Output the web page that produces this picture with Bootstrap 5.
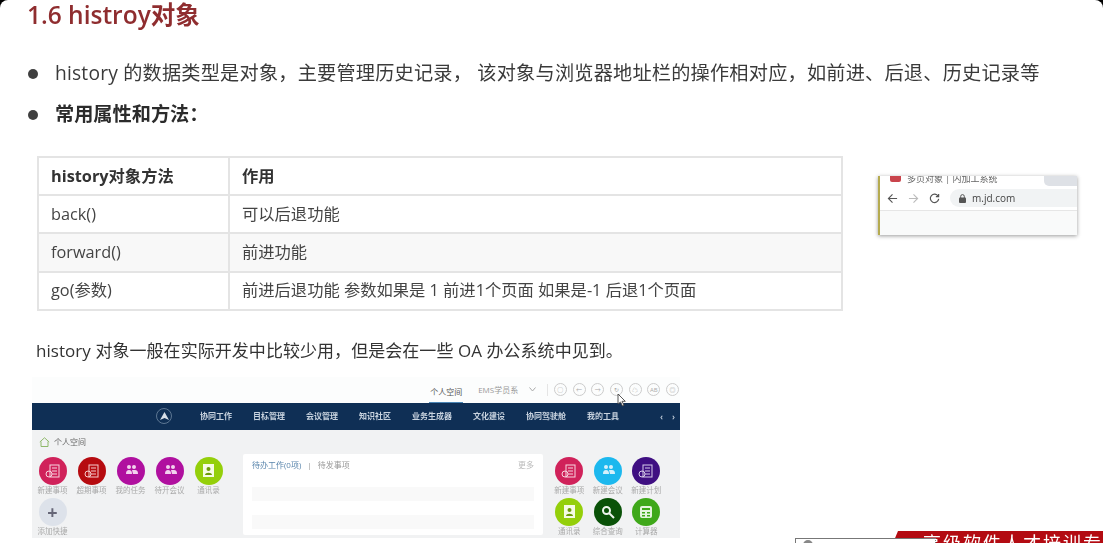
<!DOCTYPE html>
<html lang="zh">
<head>
<meta charset="utf-8">
<title>1.6 histroy对象</title>
<link href="https://cdn.jsdelivr.net/npm/bootstrap@5.3.0/dist/css/bootstrap.min.css" rel="stylesheet">
<style>
html,body{margin:0;height:543px;overflow:hidden;background:#000}
body{font-family:"Open Sans","Noto Sans CJK SC",sans-serif;color:#333}
.slide{position:relative;height:543px;width:1103px;background:#fff;border-radius:8px 8px 0 0;overflow:hidden;filter:blur(.35px)}
.slide-title{margin:0;padding:0 0 0 27px;height:30px;line-height:30px;font-size:24.500px;font-weight:600;color:#8f2d2f}
.point-list{list-style:none;margin:23px 0 0;padding:0 0 0 28px}
.point-list li{display:flex;align-items:center;height:41px;font-size:19.2px;color:#3a3a3a;letter-spacing:.2px}
.point-list li::before{content:"";flex:none;width:10px;height:10px;border-radius:50%;background:#3f3f3f;margin-right:17px}
.point-list strong{font-weight:700;color:#2b2b2b;letter-spacing:0}
.mid-row{display:flex;align-items:flex-start;margin:21px 0 0 37px}
.method-table{width:806px;margin:0;border-collapse:collapse;font-size:16.300px;color:#444;table-layout:fixed}
.method-table th,.method-table td{height:38.2px;padding:0 12px;border:2px solid #e4e4e4;vertical-align:middle;background:#fff;box-shadow:none;color:#444}
.method-table th{font-weight:700;color:#333}
.method-table tr.alt td{background:#f8f8f8}
.method-table .first-col{width:191px}
.browser-shot{width:199px;height:59px;margin:20px 0 0 35px;background:#fff;border-left:2px solid #b5ab50;box-shadow:0 1px 4px rgba(0,0,0,.4);overflow:hidden;display:flex;flex-direction:column}
.tab-strip{height:10px;flex:none;display:flex;align-items:flex-start;padding-left:10px;font-size:9px;line-height:6px;color:#666;overflow:hidden;white-space:nowrap}
.fav{width:11px;height:6px;background:#c9444c;border-radius:0 0 2px 2px;margin-right:6px;flex:none}
.tab-grey{width:33px;height:10px;background:#dee1e6;border-radius:0 0 0 5px;margin-left:auto}
.tool-bar{height:25px;flex:none;display:flex;align-items:center;gap:10px;padding-left:7px;border-bottom:1px solid #e6e6e6}
.addr-pill{flex:1;height:18px;border-radius:9px 0 0 9px;background:#f1f3f4;display:flex;align-items:center;gap:6px;padding-left:9px;font-size:10px;color:#444}
.page-blank{flex:1;background:#f9fafa}
.note-line{margin:28px 0 0 36px;font-size:17px;line-height:24px;color:#333;height:24px;letter-spacing:.05px}
.oa-shot{margin:14px 0 0 32px;width:648px;height:161px;background:#f1f2f3;display:flex;flex-direction:column;overflow:hidden;font-size:8px;line-height:1;white-space:nowrap}
.oa-top{height:26px;flex:none;background:#fcfdfd;display:flex;align-items:center;justify-content:flex-end;color:#999;padding-right:1px}
.oa-active{color:#555;width:34px;height:26px;line-height:30px;text-align:center;border-bottom:1px solid #4a85b5;margin-right:15px}
.oa-ems{margin-right:11px}
.oa-sep{width:1px;height:12px;background:#e5e5e5;margin:0 0 0 11px}
.ring{width:13px;height:13px;border:1px solid #ccc;border-radius:50%;margin-left:5.7px;display:flex;align-items:center;justify-content:center;color:#aaa;font-size:6px}
.oa-nav{height:27px;flex:none;background:#0f2f55;display:flex;align-items:center;gap:21px;padding:0 3px 0 124px;color:#c8d3df;font-weight:600}
.oa-logo{width:16px;height:16px;border:1px solid #5d7793;border-radius:50%;margin-right:7px;display:flex;align-items:center;justify-content:center}
.oa-arrows{margin-left:auto;display:flex;gap:9px;font-size:9px;padding-right:2px}
.oa-body{flex:1;display:grid;grid-template-columns:211px 300px 1fr;min-height:0}
.crumb{display:flex;align-items:center;gap:4px;height:27px;padding:0 0 3px 7px;color:#666}
.app-grid{display:grid;grid-template-columns:repeat(5,39px);grid-auto-rows:41px;padding-left:1px}
.app-grid.right{grid-template-columns:repeat(3,38.5px);padding-left:7px;padding-top:27px}
.app{display:flex;flex-direction:column;align-items:center;color:#aaa;font-size:7.5px;gap:2px}
.app-dot{width:28px;height:28px;border-radius:50%;display:flex;align-items:center;justify-content:center;flex:none}
.panel{background:#fff;margin-top:24px;height:81px;border-radius:2px;padding:7px 9px;display:flex;flex-direction:column;overflow:hidden}
.panel-tabs{display:flex;color:#999;gap:6px;height:26px;flex:none}
.panel-tabs .on{color:#5a86ad}
.panel-more{margin-left:auto;color:#bbb}
.panel-row{height:14px;background:#f9f9f9;margin-bottom:14px;flex:none}
.mouse-arrow{position:absolute;left:617px;top:393px}
.brand-band{position:absolute;left:795px;bottom:0;width:308px;height:12px;overflow:hidden}
.band-red{position:absolute;left:98px;right:0;top:0;height:12px;background:#b30b12;clip-path:polygon(5px 0,100% 0,100% 100%,0 100%)}
.band-box{position:absolute;left:0;top:7px;width:141px;height:6px;background:#fff;border:1px solid #777;border-bottom:0}
.band-box::before{content:"";display:block;width:10px;height:10px;margin:1px 0 0 7px;border-radius:50%;background:#888}
.band-text{position:absolute;left:128px;top:3px;font-family:"Liberation Serif","Noto Sans CJK SC",serif;font-size:18px;line-height:20px;letter-spacing:2px;color:#fff;white-space:nowrap}
</style>
</head>
<body>
<main class="slide">
  <h1 class="slide-title">1.6 histroy对象</h1>
  <ul class="point-list">
    <li>history 的数据类型是对象，主要管理历史记录， 该对象与浏览器地址栏的操作相对应，如前进、后退、历史记录等</li>
    <li><strong>常用属性和方法：</strong></li>
  </ul>
  <div class="mid-row">
    <table class="table method-table">
      <thead><tr><th class="first-col">history对象方法</th><th>作用</th></tr></thead>
      <tbody>
        <tr><td>back()</td><td>可以后退功能</td></tr>
        <tr class="alt"><td>forward()</td><td>前进功能</td></tr>
        <tr><td>go(参数)</td><td>前进后退功能 参数如果是 1 前进1个页面 如果是-1 后退1个页面</td></tr>
      </tbody>
    </table>
    <div class="browser-shot">
      <div class="tab-strip"><span class="fav"></span><span>多页对象 | 内加工系统</span><span class="tab-grey"></span></div>
      <div class="tool-bar">
        <svg width="11" height="11" viewBox="0 0 12 12" fill="none" stroke="#555" stroke-width="1.2"><path d="M11 6H1.5M6 1.5 1.5 6 6 10.5"/></svg>
        <svg width="11" height="11" viewBox="0 0 12 12" fill="none" stroke="#bbb" stroke-width="1.2"><path d="M1 6h9.5M6 1.5 10.5 6 6 10.5"/></svg>
        <svg width="11" height="11" viewBox="0 0 12 12" fill="none" stroke="#555" stroke-width="1.3"><path d="M10 3.5A4.6 4.6 0 1 0 10.6 6.5"/><path d="M10.5 1v3h-3" /></svg>
        <div class="addr-pill">
          <svg width="7" height="9" viewBox="0 0 7 9"><rect x="0" y="3.5" width="7" height="5.5" rx="1" fill="#555"/><path d="M1.7 4V2.4a1.8 1.8 0 0 1 3.6 0V4" fill="none" stroke="#555"/></svg>
          <span>m.jd.com</span>
        </div>
      </div>
      <div class="page-blank"></div>
    </div>
  </div>
  <p class="note-line">history 对象一般在实际开发中比较少用，但是会在一些 OA 办公系统中见到。</p>
  <section class="oa-shot">
    <div class="oa-top">
      <span class="oa-active">个人空间</span><span class="oa-ems">EMS学员系</span>
      <svg width="7" height="5" viewBox="0 0 7 5" fill="none" stroke="#aaa"><path d="M.5 .5 3.5 4 6.5 .5"/></svg>
      <span class="oa-sep"></span>
      <span class="ring">○</span><span class="ring">←</span><span class="ring">→</span><span class="ring">↻</span><span class="ring">☁</span><span class="ring">AB</span><span class="ring">◎</span>
    </div>
    <nav class="oa-nav">
      <span class="oa-logo"><svg width="9" height="8" viewBox="0 0 9 8"><path d="M4.500 0 9 8 4.500 6 0 8Z" fill="#d6dee7"/></svg></span>
      <span>协同工作</span><span>目标管理</span><span>会议管理</span><span>知识社区</span><span>业务生成器</span><span>文化建设</span><span>协同驾驶舱</span><span>我的工具</span>
      <span class="oa-arrows"><span>‹</span><span>›</span></span>
    </nav>
    <div class="oa-body">
      <div>
        <div class="crumb">
          <svg width="11" height="10" viewBox="0 0 11 10" fill="none" stroke="#8fb86a"><path d="M.8 5 5.500 .8 10.200 5M2 4.500V9.500H9V4.500"/></svg>
          <span>个人空间</span>
        </div>
        <div class="app-grid">
          <div class="app"><span class="app-dot" style="background:#d0225a"><svg width="16" height="16" viewBox="0 0 16 16" fill="none" stroke="#f7d5df"><rect x="5" y="2" width="9" height="12"/><path d="M7 5h5M7 8h5M7 11h5"/><circle cx="4" cy="11" r="3"/></svg></span><span>新建事项</span></div>
          <div class="app"><span class="app-dot" style="background:#b60b10"><svg width="16" height="16" viewBox="0 0 16 16" fill="none" stroke="#f5cccc"><rect x="5" y="2" width="9" height="12"/><path d="M7 5h5M7 8h5M7 11h5"/><circle cx="4" cy="11" r="3"/></svg></span><span>超期事项</span></div>
          <div class="app"><span class="app-dot" style="background:#b0109f"><svg width="16" height="16" viewBox="0 0 16 16" fill="#f2d2ee"><circle cx="6" cy="4" r="2"/><circle cx="11" cy="4" r="2"/><path d="M3 11c0-3 1-4 3-4s3 1 3 4zM9 7h3c2 0 3 1 3 4h-5z"/></svg></span><span>我的任务</span></div>
          <div class="app"><span class="app-dot" style="background:#b0109f"><svg width="16" height="16" viewBox="0 0 16 16" fill="#f2d2ee"><circle cx="6" cy="4" r="2"/><circle cx="11" cy="4" r="2"/><path d="M3 11c0-3 1-4 3-4s3 1 3 4zM9 7h3c2 0 3 1 3 4h-5z"/></svg></span><span>待开会议</span></div>
          <div class="app"><span class="app-dot" style="background:#94cf0a"><svg width="15" height="15" viewBox="0 0 15 15"><rect x="2" y="1" width="11" height="13" fill="#f5fbe3"/><circle cx="7.500" cy="6" r="2" fill="#6c9a08"/><path d="M4 12c0-3 7-3 7 0z" fill="#6c9a08"/></svg></span><span>通讯录</span></div>
          <div class="app"><span class="app-dot" style="background:#dde2ea;color:#667;font-size:18px;font-weight:700">+</span><span>添加快捷</span></div>
        </div>
      </div>
      <div class="panel">
        <div class="panel-tabs"><span class="on">待办工作(0项)</span><span>|</span><span>待发事项</span><span class="panel-more">更多</span></div>
        <div class="panel-row"></div>
        <div class="panel-row"></div>
      </div>
      <div class="app-grid right">
        <div class="app"><span class="app-dot" style="background:#d0225a"><svg width="16" height="16" viewBox="0 0 16 16" fill="none" stroke="#f7d5df"><rect x="5" y="2" width="9" height="12"/><path d="M7 5h5M7 8h5M7 11h5"/><circle cx="4" cy="11" r="3"/></svg></span><span>新建事项</span></div>
        <div class="app"><span class="app-dot" style="background:#1cb8ee"><svg width="16" height="16" viewBox="0 0 16 16" fill="#d5f0fb"><circle cx="6" cy="4" r="2"/><circle cx="11" cy="4" r="2"/><path d="M3 11c0-3 1-4 3-4s3 1 3 4zM9 7h3c2 0 3 1 3 4h-5z"/></svg></span><span>新建会议</span></div>
        <div class="app"><span class="app-dot" style="background:#3f0f82"><svg width="16" height="16" viewBox="0 0 16 16" fill="none" stroke="#d8cdea"><rect x="5" y="2" width="9" height="12"/><path d="M7 5h5M7 8h5M7 11h5"/><circle cx="4" cy="11" r="3"/></svg></span><span>新建计划</span></div>
        <div class="app"><span class="app-dot" style="background:#94cf0a"><svg width="15" height="15" viewBox="0 0 15 15"><rect x="2" y="1" width="11" height="13" fill="#f5fbe3"/><circle cx="7.500" cy="6" r="2" fill="#6c9a08"/><path d="M4 12c0-3 7-3 7 0z" fill="#6c9a08"/></svg></span><span>通讯录</span></div>
        <div class="app"><span class="app-dot" style="background:#0a5208"><svg width="14" height="14" viewBox="0 0 14 14" fill="none" stroke="#eef5ee" stroke-width="2"><circle cx="5.500" cy="5.500" r="3.500"/><path d="m8 8 5 5"/></svg></span><span>综合查询</span></div>
        <div class="app"><span class="app-dot" style="background:#3fa81a"><svg width="14" height="14" viewBox="0 0 14 14"><rect x="1" y="1" width="12" height="12" rx="2" fill="#e5f4de"/><path d="M3 3h8v2H3zM3 7h3v1.500H3zM8 7h3v1.500H8zM3 10h3v1.500H3zM8 10h3v1.500H8z" fill="#3fa81a"/></svg></span><span>计算器</span></div>
      </div>
    </div>
  </section>
  <svg class="mouse-arrow" width="10" height="14" viewBox="0 0 10 14"><path d="M1 1v10l2.500-2 2 4 1.500-.7-2-4h3.300Z" fill="#fff" stroke="#444" stroke-width=".9"/></svg>
  <div class="brand-band">
    <div class="band-red"></div>
    <div class="band-box"></div>
    <div class="band-text">高级软件人才培训专家</div>
  </div>
</main>
<script src="https://cdn.jsdelivr.net/npm/bootstrap@5.3.0/dist/js/bootstrap.bundle.min.js"></script>
</body>
</html>
